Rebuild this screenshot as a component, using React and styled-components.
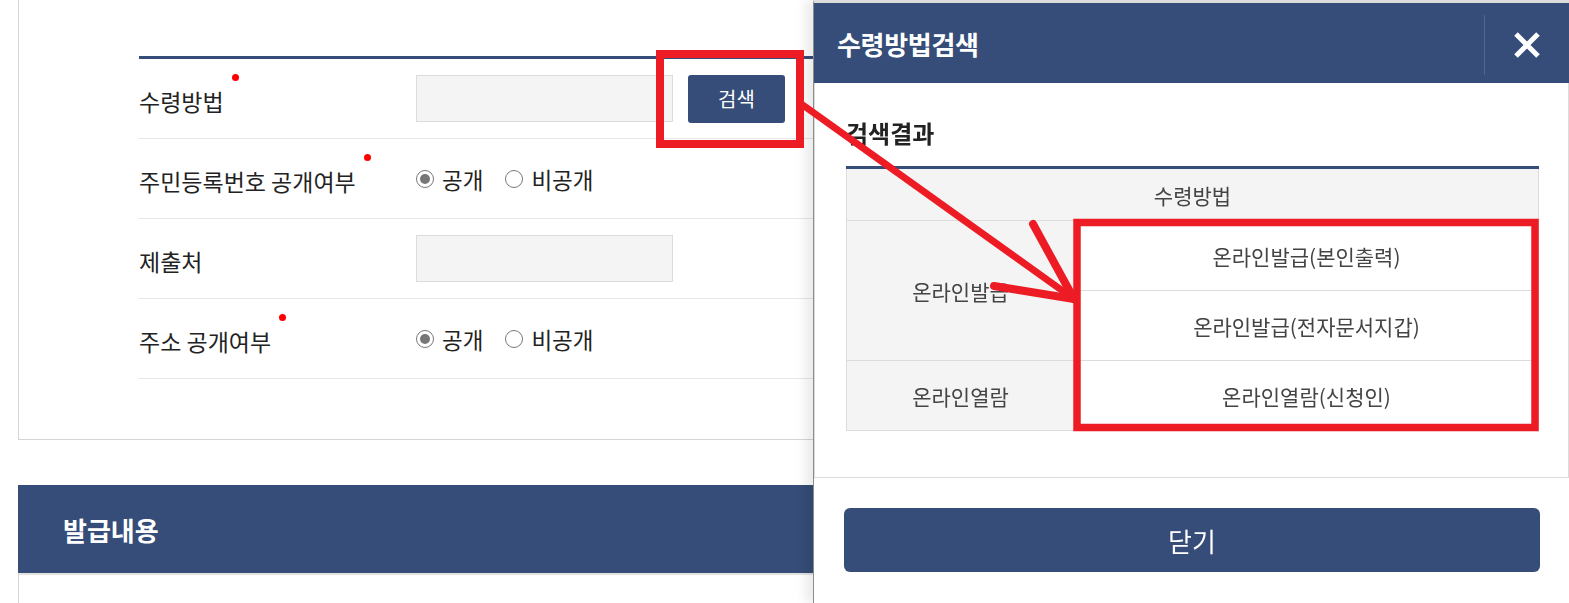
import React from "react";
import styled, { createGlobalStyle } from "styled-components";

const NAVY = "#354d78";
const RED = "#ed1c24";

const GlobalStyle = createGlobalStyle`
  html, body {
    margin: 0;
    padding: 0;
    background: #fff;
    overflow: hidden;
  }
  body {
    font-family: "Noto Sans CJK KR", "Noto Sans", sans-serif;
    color: #222;
  }
  * { box-sizing: border-box; }
`;

const Page = styled.div`
  position: relative;
  height: 603px;
  padding: 0 18px;
`;

const FormBox = styled.div`
  border: 1px solid #d5d5d5;
  border-top: none;
  padding: 56px 0 60px 120px;
`;

const FormTable = styled.div`
  border-top: 3px solid ${NAVY};
`;

const Row = styled.div`
  display: grid;
  grid-template-columns: 277px 1fr;
  align-items: center;
  height: 80px;
  border-bottom: 1px solid #e6e6e6;
`;

const Label = styled.span`
  position: relative;
  justify-self: start;
  font-size: 23px;
  line-height: 32px;
  color: #222;
  padding-top: 4px;

  ${p => p.$required && `
    &::after {
      content: "";
      position: absolute;
      left: calc(100% + 8px);
      top: -7px;
      width: 7px;
      height: 7px;
      border-radius: 50%;
      background: #f00;
    }
  `}
`;

const Field = styled.div`
  display: flex;
  align-items: center;
  gap: 15px;
`;

const TextInput = styled.div`
  width: 257px;
  height: 47px;
  background: #f4f4f4;
  border: 1px solid #dcdcdc;
`;

const SearchButton = styled.button`
  width: 97px;
  height: 48px;
  border: none;
  border-radius: 3px;
  background: ${NAVY};
  color: #fff;
  font-family: inherit;
  font-size: 20px;
  padding: 0;
`;

const RadioGroup = styled.div`
  display: flex;
  align-items: center;
  gap: 22px;
`;

const RadioItem = styled.label`
  display: flex;
  align-items: center;
  gap: 8px;
  font-size: 22.5px;
  color: #222;
`;

const RadioMark = styled.span`
  width: 18px;
  height: 18px;
  border-radius: 50%;
  border: 1px solid #7a7a7a;
  background: #fff;
  display: flex;
  align-items: center;
  justify-content: center;

  &::after {
    content: "";
    width: 10px;
    height: 10px;
    border-radius: 50%;
    background: ${p => (p.$checked ? "#777" : "transparent")};
  }
`;

const Section = styled.section`
  margin-top: 45px;
`;

const SectionBar = styled.div`
  height: 88px;
  background: ${NAVY};
  display: flex;
  align-items: center;
  padding-left: 45px;
  color: #fff;
  font-size: 26px;
  font-weight: 700;
`;

const SectionBody = styled.div`
  height: 60px;
  border: 1px solid #d5d5d5;
  border-top: 2px solid #e2e2e2;
`;

/* modal panel */

const Modal = styled.aside`
  position: fixed;
  top: 0;
  right: 0;
  bottom: 0;
  width: 756px;
  background: #fff;
  border-left: 1px solid #8c8c8c;
  border-top: 3px solid #dcdcdc;
  box-shadow: -8px 0 10px rgba(0, 0, 0, 0.08);
  display: flex;
  flex-direction: column;
  z-index: 5;
`;

const ModalHeader = styled.header`
  height: 80px;
  flex: none;
  background: ${NAVY};
  display: flex;
  align-items: center;
  justify-content: space-between;
  padding-left: 23px;
`;

const ModalTitle = styled.h2`
  margin: 0;
  color: #fff;
  font-size: 26px;
  font-weight: 700;
  letter-spacing: -0.3px;
`;

const CloseButton = styled.button`
  width: 85px;
  height: 60px;
  margin-top: 4px;
  border: none;
  border-left: 1px solid rgba(255, 255, 255, 0.14);
  background: transparent;
  display: flex;
  align-items: center;
  justify-content: center;
  padding: 0;
`;

const ModalBody = styled.div`
  border: 1px solid #dcdcdc;
  border-top: none;
  padding: 33px 29px 46px 31px;
`;

const ResultTitle = styled.h3`
  margin: 0 0 16px;
  font-size: 24px;
  line-height: 34px;
  font-weight: 700;
  color: #222;
`;

const ResultTable = styled.table`
  width: 100%;
  border-collapse: collapse;
  border-top: 3px solid ${NAVY};
  table-layout: fixed;

  th, td {
    border: 1px solid #dcdcdc;
    text-align: center;
    font-size: 21px;
    font-weight: 400;
    color: #444;
    padding: 0;
  }

  th {
    height: 53px;
    background: #f4f4f4;
  }

  td {
    height: 70px;
  }
`;

const GroupCell = styled.td`
  background: #f4f4f4;
`;

const ModalFooter = styled.div`
  padding: 30px 29px 0 30px;
`;

const CloseBig = styled.button`
  width: 100%;
  height: 64px;
  border: none;
  border-radius: 6px;
  background: ${NAVY};
  color: #fff;
  font-family: inherit;
  font-size: 26px;
`;

const Annotation = styled.svg`
  position: fixed;
  left: 0;
  top: 0;
  width: 1569px;
  height: 603px;
  pointer-events: none;
  z-index: 10;
`;

const rows = [
  { label: "수령방법", required: true, type: "search" },
  { label: "주민등록번호 공개여부", required: true, type: "radio" },
  { label: "제출처", type: "input" },
  { label: "주소 공개여부", required: true, type: "radio" },
];

const Radios = () => (
  <RadioGroup>
    <RadioItem><RadioMark $checked />공개</RadioItem>
    <RadioItem><RadioMark />비공개</RadioItem>
  </RadioGroup>
);

export default function App() {
  return (
    <>
      <GlobalStyle />
      <Page>
        <FormBox>
          <FormTable>
            {rows.map(r => (
              <Row key={r.label}>
                <Label $required={r.required}>{r.label}</Label>
                <Field>
                  {r.type === "radio" ? <Radios /> : <TextInput />}
                  {r.type === "search" && <SearchButton>검색</SearchButton>}
                </Field>
              </Row>
            ))}
          </FormTable>
        </FormBox>

        <Section>
          <SectionBar>발급내용</SectionBar>
          <SectionBody />
        </Section>
      </Page>

      <Modal>
        <ModalHeader>
          <ModalTitle>수령방법검색</ModalTitle>
          <CloseButton aria-label="닫기">
            <svg width="28" height="26" viewBox="0 0 28 26">
              <path d="M3 2 L25 24 M25 2 L3 24" stroke="#fff" strokeWidth="5" />
            </svg>
          </CloseButton>
        </ModalHeader>
        <ModalBody>
          <ResultTitle>검색결과</ResultTitle>
          <ResultTable>
            <colgroup>
              <col style={{ width: "228px" }} />
              <col />
            </colgroup>
            <thead>
              <tr><th colSpan={2}>수령방법</th></tr>
            </thead>
            <tbody>
              <tr>
                <GroupCell rowSpan={2}>온라인발급</GroupCell>
                <td>온라인발급(본인출력)</td>
              </tr>
              <tr>
                <td>온라인발급(전자문서지갑)</td>
              </tr>
              <tr>
                <GroupCell>온라인열람</GroupCell>
                <td>온라인열람(신청인)</td>
              </tr>
            </tbody>
          </ResultTable>
        </ModalBody>
        <ModalFooter>
          <CloseBig>닫기</CloseBig>
        </ModalFooter>
      </Modal>

      <Annotation viewBox="0 0 1569 603">
        <g fill="none" stroke={RED} strokeLinecap="round">
          <rect x="660" y="54" width="140" height="90" strokeWidth="8" strokeLinecap="butt" />
          <rect x="1077" y="222.5" width="458" height="205" strokeWidth="7.5" strokeLinecap="butt" />
          <path d="M800 103 L1074 299" strokeWidth="7" />
          <path d="M1033 224 L1074 299" strokeWidth="8" />
          <path d="M994 286 L1074 299" strokeWidth="8" />
        </g>
      </Annotation>
    </>
  );
}
